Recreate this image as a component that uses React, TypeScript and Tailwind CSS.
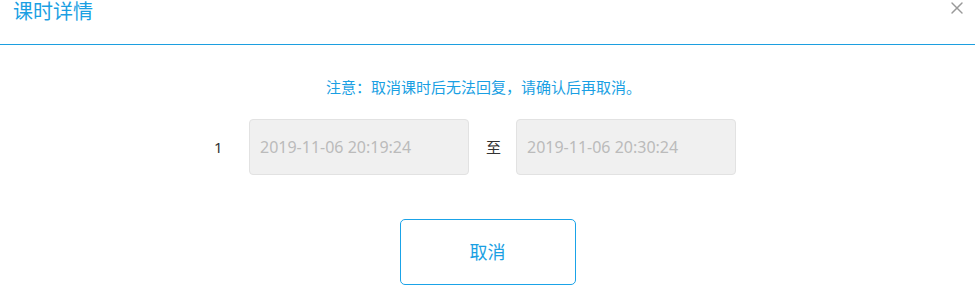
import { X } from "lucide-react";

const cjk = { fontFamily: '"Noto Sans", "Noto Sans CJK SC", sans-serif' };

export default function App() {
    return (
        <div className="w-[975px] h-[308px] bg-white overflow-hidden" style={cjk}>
            {/* HEADER */}
            <div className="h-[45px] flex items-start justify-between border-b border-[#1c9fe0]">
                <h1 className="pl-[13px] text-[20px] leading-[24px] text-[#1a9fe3] font-normal">课时详情</h1>
                <button className="mr-[8px] -mt-[2px] text-[#999]">
                    <X size={20} strokeWidth={1.7} />
                </button>
            </div>

            {/* NOTICE */}
            <p className="mt-[32px] pr-[8px] text-center text-[15px] leading-[20px] text-[#1a9fe3]">
                注意：取消课时后无法回复，请确认后再取消。
            </p>

            {/* TIME RANGE */}
            <div className="mt-[22px] pr-[25px] flex items-center justify-center">
                <span className="text-[15px] text-[#333] w-[35px]">1</span>
                <div className="w-[220px] h-[56px] flex items-center pl-[10px] rounded-[4px] bg-[#f0f0f0] border border-[#e2e2e2] text-[16px] text-[#bbb]">
                    2019-11-06 20:19:24
                </div>
                <span className="ml-[17px] mr-[15px] text-[15px] text-[#333]">至</span>
                <div className="w-[220px] h-[56px] flex items-center pl-[10px] rounded-[4px] bg-[#f0f0f0] border border-[#e2e2e2] text-[16px] text-[#bbb]">
                    2019-11-06 20:30:24
                </div>
            </div>

            {/* ACTION */}
            <div className="mt-[44px] flex justify-center">
                <button className="w-[176px] h-[66px] rounded-[5px] border border-[#1aa3e8] text-[18px] text-[#1a9fe3] bg-white">
                    取消
                </button>
            </div>
        </div>
    );
}
